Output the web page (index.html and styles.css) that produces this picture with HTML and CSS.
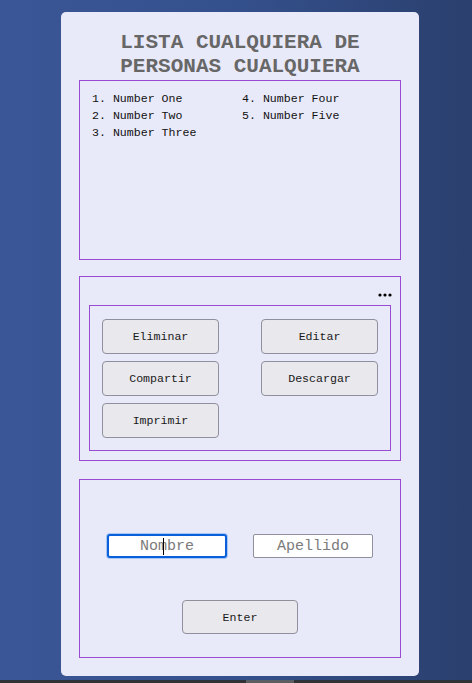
FILE: index.html
```html
<!DOCTYPE html>
<html lang="es">
<head>
<meta charset="utf-8">
<title>Lista cualquiera</title>
<link rel="stylesheet" href="styles.css">
</head>
<body>
<div class="page">
  <main class="card">
    <h1 class="title">LISTA CUALQUIERA DE PERSONAS CUALQUIERA</h1>
    <section class="box list-box">
      <ol class="people">
        <li>Number One</li>
        <li>Number Two</li>
        <li>Number Three</li>
        <li>Number Four</li>
        <li>Number Five</li>
      </ol>
    </section>
    <section class="box actions-box">
      <div class="menu-row">
        <svg class="dots" width="14" height="4" viewBox="0 0 14 4"><circle cx="2" cy="2" r="1.6"/><circle cx="7" cy="2" r="1.6"/><circle cx="12" cy="2" r="1.6"/></svg>
      </div>
      <div class="actions">
        <button class="btn">Eliminar</button>
        <button class="btn">Editar</button>
        <button class="btn">Compartir</button>
        <button class="btn">Descargar</button>
        <button class="btn">Imprimir</button>
      </div>
    </section>
    <section class="box form-box">
      <div class="fields">
        <div class="field-wrap">
          <input class="field focused" type="text" placeholder="Nombre">
          <span class="caret"></span>
        </div>
        <input class="field" type="text" placeholder="Apellido">
      </div>
      <button class="btn enter">Enter</button>
    </section>
  </main>
</div>
<div class="scrollbar"><div class="thumb"></div></div>
</body>
</html>
```

FILE: styles.css
```css
html, body {
  margin: 0;
  padding: 0;
  height: 100%;
}
body {
  width: 472px;
  height: 683px;
  overflow: hidden;
  background: linear-gradient(to right, #3a5696 0%, #34508c 50%, #2a3f6d 100%);
  font-family: "Courier New", "Liberation Mono", monospace;
  display: flex;
  flex-direction: column;
}
.page {
  flex: 1;
  display: flex;
  padding: 12px 0 0 61px;
}
.card {
  box-sizing: border-box;
  width: 358px;
  height: 664px;
  background: #e9eaf9;
  border-radius: 5px;
  padding: 19px 18px 0;
  display: flex;
  flex-direction: column;
}
.title {
  margin: 0 0 1px;
  font-size: 21px;
  line-height: 24px;
  font-weight: bold;
  color: #676767;
  text-align: center;
  letter-spacing: 0;
}
.box {
  box-sizing: border-box;
  border: 1px solid #9a4bd4;
}
.list-box {
  height: 180px;
}
.people {
  margin: 0;
  padding: 9px 0 0 12px;
  width: 300px;
  list-style-position: inside;
  columns: 2;
  column-gap: 0;
  font-size: 11.6px;
  line-height: 17px;
  color: #111;
}
.actions-box {
  margin-top: 16px;
  height: 185px;
  padding: 0 9px 9px;
  display: flex;
  flex-direction: column;
}
.menu-row {
  height: 28px;
  display: flex;
  justify-content: flex-end;
  align-items: center;
  padding-top: 7px;
  box-sizing: border-box;
}
.dots {
  display: block;
  fill: #000;
  margin-right: -1px;
}
.actions {
  flex: 1;
  border: 1px solid #9a4bd4;
  padding: 13px 12px 12px;
  display: grid;
  grid-template-columns: 117px 117px;
  grid-auto-rows: 35px;
  justify-content: space-between;
  row-gap: 7px;
}
.btn {
  box-sizing: border-box;
  background: #e9e8ed;
  border: 1px solid #8f8f9d;
  border-radius: 4px;
  font-family: "Courier New", "Liberation Mono", monospace;
  font-size: 11.6px;
  font-weight: normal;
  color: #1a1a1a;
  padding: 0;
}
.form-box {
  margin-top: 18px;
  height: 179px;
  padding-top: 54px;
  display: flex;
  flex-direction: column;
  align-items: center;
  gap: 42px;
}
.fields {
  display: flex;
  gap: 26px;
}
.field-wrap {
  position: relative;
}
.field {
  box-sizing: border-box;
  width: 120px;
  height: 24px;
  border: 1px solid #8f8f9d;
  border-radius: 2px;
  background: #fff;
  font-family: "Courier New", "Liberation Mono", monospace;
  font-size: 15px;
  text-align: center;
  padding: 0;
  display: block;
}
.field::placeholder {
  color: #7b7b7b;
}
.field.focused {
  border: 2px solid #0a60da;
  border-radius: 3px;
  box-shadow: 0 0 0 1px #a7c6f5;
  outline: none;
}
.caret {
  position: absolute;
  left: 56px;
  top: 4px;
  width: 1px;
  height: 17px;
  background: #000;
}
.enter {
  width: 116px;
  height: 34px;
}
.scrollbar {
  height: 3px;
  background: #2f3338;
}
.thumb {
  margin-left: 246px;
  width: 48px;
  height: 3px;
  background: #5b5f64;
}
```
